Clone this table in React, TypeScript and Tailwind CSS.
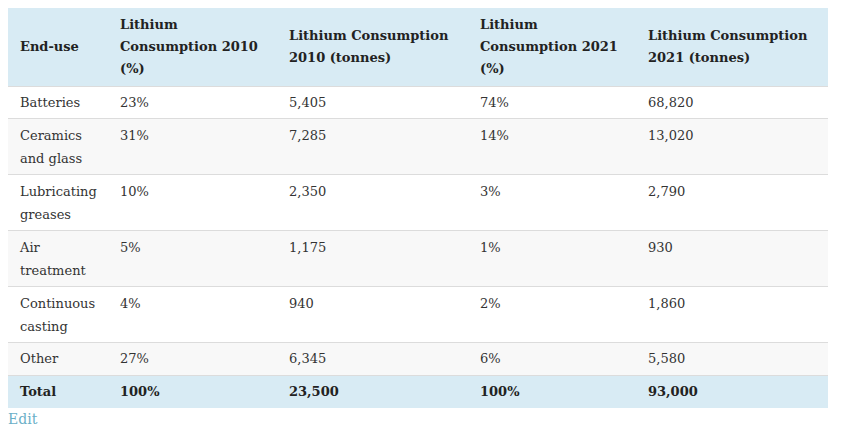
const rows = [
  ["Batteries", "23%", "5,405", "74%", "68,820"],
  ["Ceramics and glass", "31%", "7,285", "14%", "13,020"],
  ["Lubricating greases", "10%", "2,350", "3%", "2,790"],
  ["Air treatment", "5%", "1,175", "1%", "930"],
  ["Continuous casting", "4%", "940", "2%", "1,860"],
  ["Other", "27%", "6,345", "6%", "5,580"],
];

const headers = [
  "End-use",
  "Lithium Consumption 2010 (%)",
  "Lithium Consumption 2010 (tonnes)",
  "Lithium Consumption 2021 (%)",
  "Lithium Consumption 2021 (tonnes)",
];

const totals = ["Total", "100%", "23,500", "100%", "93,000"];

export default function App() {
  return (
    <div className="min-h-screen bg-white p-2 font-['DejaVu_Serif',serif] text-[13px] leading-[23px] text-[#333]">
      <table className="w-[820px] table-fixed border-collapse">
        <colgroup>
          <col className="w-[100px]" />
          <col className="w-[169px]" />
          <col className="w-[191px]" />
          <col className="w-[168px]" />
          <col className="w-[192px]" />
        </colgroup>
        <thead>
          <tr className="h-[78px] border-b border-[#dcdcdc] bg-[#d8ebf4]">
            {headers.map((h) => (
              <th
                key={h}
                className="px-3 py-[5px] text-left align-middle font-bold leading-[22px] text-[#222]"
              >
                {h}
              </th>
            ))}
          </tr>
        </thead>
        <tbody>
          {rows.map((r, i) => (
            <tr
              key={r[0]}
              className={`border-b border-[#dcdcdc] ${i % 2 ? "bg-[#f8f8f8]" : "bg-white"}`}
            >
              {r.map((c, j) => (
                <td key={j} className="px-3 pt-[4.5px] pb-[4.4px] align-top">
                  {c}
                </td>
              ))}
            </tr>
          ))}
          <tr className="bg-[#d8ebf4]">
            {totals.map((c, j) => (
              <td key={j} className="px-3 pt-[4.5px] pb-[4.4px] font-bold text-[#222]">
                {c}
              </td>
            ))}
          </tr>
        </tbody>
      </table>
      <a className="block text-[14px] leading-[22px] text-[#6aafc7]">Edit</a>
    </div>
  );
}
